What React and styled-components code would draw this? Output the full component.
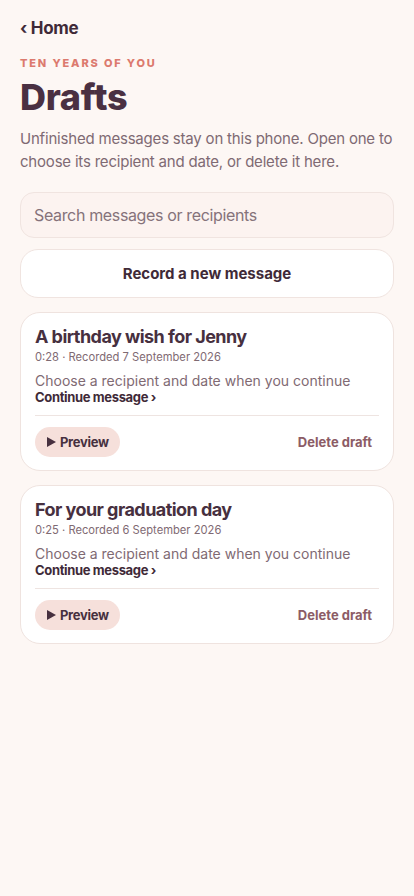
import React from 'react'
import styled, { createGlobalStyle } from 'styled-components';

const GlobalStyle = createGlobalStyle`
  html, body {
    margin: 0;
    padding: 0;
    background: #fdf7f4;
  }
  body {
    font-family: Inter, "Noto Sans", sans-serif;
    color: #47303f;
    -webkit-font-smoothing: antialiased;
  }
  * { box-sizing: border-box; }
`;

const Page = styled.div`
min-height: 896px;
padding: 17px 20px 40px;
background: #fdf7f4;
`;

const BackLink = styled.a`
display: inline-flex;
align-items: center;
gap: 5px;
font-size: 17px;
font-weight: 700;
line-height: 22px;
letter-spacing: -0.3px;
color: #3f2a38;
text-decoration: none;
`;

const Eyebrow = styled.div`
margin-top: 17px;
font-size: 11px;
font-weight: 800;
letter-spacing: 1.85px;
line-height: 14px;
color: #dc7a6e;
text-transform: uppercase;
`;

const Title = styled.h1`
margin: 5px 0 0;
font-size: 36px;
font-weight: 800;
line-height: 44px;
letter-spacing: -0.3px;
color: #4a3042;
`;

const Intro = styled.p`
margin: 8px 0 0;
font-size: 15px;
line-height: 23px;
letter-spacing: -0.2px;
color: #7f6a73;
`;

const Stack = styled.div`
display: flex;
flex-direction: column;
gap: ${p => p.$gap || 11}px;
margin-top: ${p => p.$top || 0}px;
`;

const SearchInput = styled.input`
width: 100%;
height: 46px;
padding: 0 13px;
border-radius: 14px;
border: 1px solid #f0e4e0;
background: #fcf3f0;
font-family: inherit;
font-size: 16px;
letter-spacing: -0.35px;
color: #47303f;
outline: 0;

&::placeholder {
  color: #85727a;
}
`;

const RecordButton = styled.button`
width: 100%;
height: 49px;
border-radius: 18px;
border: 1px solid #f0e4e0;
background: #fff;
font-family: inherit;
font-size: 15px;
font-weight: 700;
color: #3f2a38;
cursor: pointer;
`;

const Card = styled.article`
background: #fff;
border: 1px solid #efe3df;
border-radius: 20px;
padding: 12px 14px 13px;
`;

const CardTitle = styled.h2`
margin: 0;
font-size: 18px;
font-weight: 700;
line-height: 24px;
letter-spacing: -0.55px;
color: #47303f;
`;

const Meta = styled.div`
font-size: 11.2px;
line-height: 16px;
color: #7f6a73;
`;

const Hint = styled.div`
margin-top: 7px;
font-size: 14px;
line-height: 17px;
color: #7f6a73;
`;

const ContinueLink = styled.a`
display: block;
font-size: 13px;
font-weight: 700;
line-height: 16px;
letter-spacing: -0.35px;
color: #3f2a38;
text-decoration: none;
`;

const Divider = styled.hr`
margin: 10px 0 0;
border: 0;
border-top: 1px solid #eee4e1;
`;

const Actions = styled.div`
display: flex;
align-items: center;
justify-content: space-between;
margin-top: 11px;
`;

const PreviewButton = styled.button`
display: inline-flex;
align-items: center;
gap: 4px;
height: 30px;
padding: 0 11px 0 12px;
border: 0;
border-radius: 15px;
background: #f6e0db;
font-family: inherit;
font-size: 13px;
font-weight: 700;
letter-spacing: -0.3px;
color: #47303f;
cursor: pointer;
`;

const DeleteButton = styled.button`
border: 0;
background: none;
padding: 0 7px 0 0;
font-family: inherit;
font-size: 13px;
font-weight: 700;
color: #8c5c66;
cursor: pointer;
`;

const drafts = [
  { title: 'A birthday wish for Jenny', length: '0:28', recorded: '7 September 2026' },
  { title: 'For your graduation day', length: '0:25', recorded: '6 September 2026' },
];

function DraftCard({ draft }) {
  return (
    <Card>
      <CardTitle>{draft.title}</CardTitle>
      <Meta>{draft.length} · Recorded {draft.recorded}</Meta>
      <Hint>Choose a recipient and date when you continue</Hint>
      <ContinueLink href="#">Continue message ›</ContinueLink>
      <Divider />
      <Actions>
        <PreviewButton>
          <svg width="9" height="10" viewBox="0 0 9 10"><path d="M0 0L9 5L0 10Z" fill="currentColor" /></svg>
          Preview
        </PreviewButton>
        <DeleteButton>Delete draft</DeleteButton>
      </Actions>
    </Card>
  )
}

export default function App() {
  return (
    <>
      <GlobalStyle />
      <Page>
        <BackLink href="#">‹ Home</BackLink>
        <Eyebrow>Ten years of you</Eyebrow>
        <Title>Drafts</Title>
        <Intro>Unfinished messages stay on this phone. Open one to choose its recipient and date, or delete it here.</Intro>
        <Stack $top={19}>
          <SearchInput placeholder="Search messages or recipients" />
          <RecordButton>Record a new message</RecordButton>
        </Stack>
        <Stack $top={14} $gap={14}>
          {drafts.map(d => <DraftCard key={d.title} draft={d} />)}
        </Stack>
      </Page>
    </>
  )
}
